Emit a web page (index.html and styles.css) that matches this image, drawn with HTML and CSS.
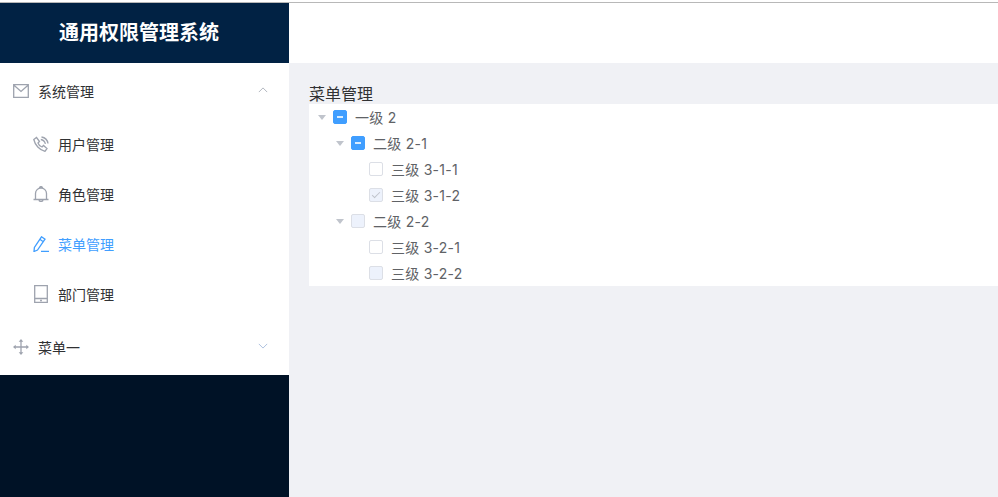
FILE: index.html
```html
<!DOCTYPE html>
<html lang="zh">
<head>
<meta charset="utf-8">
<title>通用权限管理系统</title>
<link rel="stylesheet" href="styles.css">
</head>
<body>
<div class="app">
  <aside class="sidebar">
    <div class="logo">通用权限管理系统</div>
    <nav class="menu">
      <div class="group">
        <svg class="icon" viewBox="0 0 16 14"><path d="M.7.7h14.600v12.600H.7zM1 1.200l7 6.300 7-6.300"/></svg>
        <span>系统管理</span>
        <svg class="arrow up" viewBox="0 0 12 7"><path d="M1 6l5-5 5 5"/></svg>
      </div>
      <div class="item">
        <svg class="icon" viewBox="0 0 16 16"><path d="M.8 3.500L3.500 1.500l3 4L5 7c.5 1.500 2.500 3.500 4 4l1.500-1.500 3.500 3L12 15.300C6.500 14 2 9 .8 3.500zM8.500 1c3.200.5 6 3.200 6.500 6.500M7.800 3.500c2.200.3 4 2 4.600 4.300"/></svg>
        <span>用户管理</span>
      </div>
      <div class="item">
        <svg class="icon" viewBox="0 0 16 16"><path d="M.5 13.500h15M2.500 13.500V7.500a5.500 5.500 0 0 1 11 0v6M6.500 2.100a1.500 1.500 0 0 1 3 0M6 13.500a2 2 0 0 0 4 0"/></svg>
        <span>角色管理</span>
      </div>
      <div class="item active">
        <svg class="icon" viewBox="0 0 16 16"><path d="M8.500.8l3.500 2.400-7.500 10.800-3.500 1.500.4-4zM6.800 3.300l3.500 2.400M8 15.300h8"/></svg>
        <span>菜单管理</span>
      </div>
      <div class="item">
        <svg class="icon tablet" viewBox="0 0 14 18"><path d="M.7.700h12.600v16.600H.7zM.7 13.500h12.600"/><circle cx="7" cy="15.400" r="1"/></svg>
        <span>部门管理</span>
      </div>
      <div class="group last">
        <svg class="icon" viewBox="0 0 16 16"><path d="M8 2v12M2 8h12"/><path class="solid" d="M8 0l2.300 2.700H5.700zM8 16l2.300-2.700H5.700zM0 8l2.700-2.300v4.600zM16 8l-2.700-2.300v4.600z"/></svg>
        <span>菜单一</span>
        <svg class="arrow down" viewBox="0 0 12 7"><path d="M1 1l5 5 5-5"/></svg>
      </div>
    </nav>
  </aside>
  <div class="main">
    <header class="topbar"></header>
    <main class="content">
      <div class="title">菜单管理</div>
      <div class="tree">
        <div class="node"><i class="caret"></i><i class="box half"></i><span>一级 2</span></div>
        <div class="node l2"><i class="caret"></i><i class="box half"></i><span>二级 2-1</span></div>
        <div class="node l3"><i class="box"></i><span>三级 3-1-1</span></div>
        <div class="node l3"><i class="box off checked"></i><span>三级 3-1-2</span></div>
        <div class="node l2"><i class="caret"></i><i class="box off"></i><span>二级 2-2</span></div>
        <div class="node l3"><i class="box"></i><span>三级 3-2-1</span></div>
        <div class="node l3"><i class="box off"></i><span>三级 3-2-2</span></div>
      </div>
    </main>
  </div>
</div>
</body>
</html>
```
FILE: styles.css
```css
* { box-sizing: border-box; }
html, body { margin: 0; height: 100%; }
html { background: #fff; }
body {
  font-family: "Inter", "Noto Sans CJK SC", sans-serif;
  padding-top: 2px;
  overflow: hidden;
}
.app {
  display: flex;
  height: 495px;
  border-top: 1px solid #b8b8b8;
}
.sidebar {
  width: 289px;
  flex: none;
  background: #001226;
  display: flex;
  flex-direction: column;
}
.logo {
  height: 60px;
  padding-right: 11px;
  background: #012244;
  color: #fff;
  font-size: 20px;
  font-weight: 700;
  line-height: 60px;
  text-align: center;
}
.menu { background: #fff; height: 312px; }
.group, .item {
  display: flex;
  align-items: center;
  color: #303133;
  font-size: 14px;
}
.group { height: 56px; padding: 0 20px 0 13px; }
.item { height: 50px; padding-left: 33px; }
.item.active { color: #409eff; }
.icon {
  width: 16px;
  height: 16px;
  margin-right: 9px;
  fill: none;
  stroke: #9ea3ae;
  stroke-width: 1.300;
}
.tablet { height: 18px; }
.active .icon { stroke: #409eff; }
.icon circle { fill: #9ea3ae; stroke: none; }
.icon .solid { fill: #9ea3ae; stroke: none; }
.arrow {
  width: 10px;
  height: 6px;
  margin: 0 1px 3px auto;
  fill: none;
  stroke: #a3a8b3;
  stroke-width: 1;
}
.arrow.down { stroke: #9db6d8; }
.main { flex: 1; display: flex; flex-direction: column; min-width: 0; }
.topbar { height: 60px; background: #fff; }
.content { flex: 1; background: #f0f1f5; padding: 21px 0 0 20px; }
.title { font-size: 16px; line-height: 20px; color: #303133; }
.tree {
  background: #fff;
  font-size: 14px;
  color: #606266;
  letter-spacing: .25px;
}
.node { display: flex; align-items: center; height: 26px; padding-left: 9px; }
.node.l2 { padding-left: 27px; }
.node.l3 { padding-left: 60px; }
.caret {
  width: 0;
  height: 0;
  margin-right: 7px;
  border: 4px solid transparent;
  border-top: 5px solid #c0c4cc;
  border-bottom: 0;
}
.box {
  position: relative;
  width: 14px;
  height: 14px;
  margin-right: 8px;
  border: 1px solid #dcdfe6;
  border-radius: 2px;
  background: #fff;
}
.box.half { background: #409eff; border-color: #409eff; }
.box.half::after {
  content: "";
  position: absolute;
  left: 3px;
  right: 3px;
  top: 5px;
  height: 2px;
  background: #d9ecff;
}
.box.off { background: #edf2fc; }
.box.checked::after {
  content: "";
  position: absolute;
  left: 4px;
  top: 1px;
  width: 3px;
  height: 7px;
  border: 1px solid #c0c4cc;
  border-left: 0;
  border-top: 0;
  transform: rotate(45deg);
}
```
